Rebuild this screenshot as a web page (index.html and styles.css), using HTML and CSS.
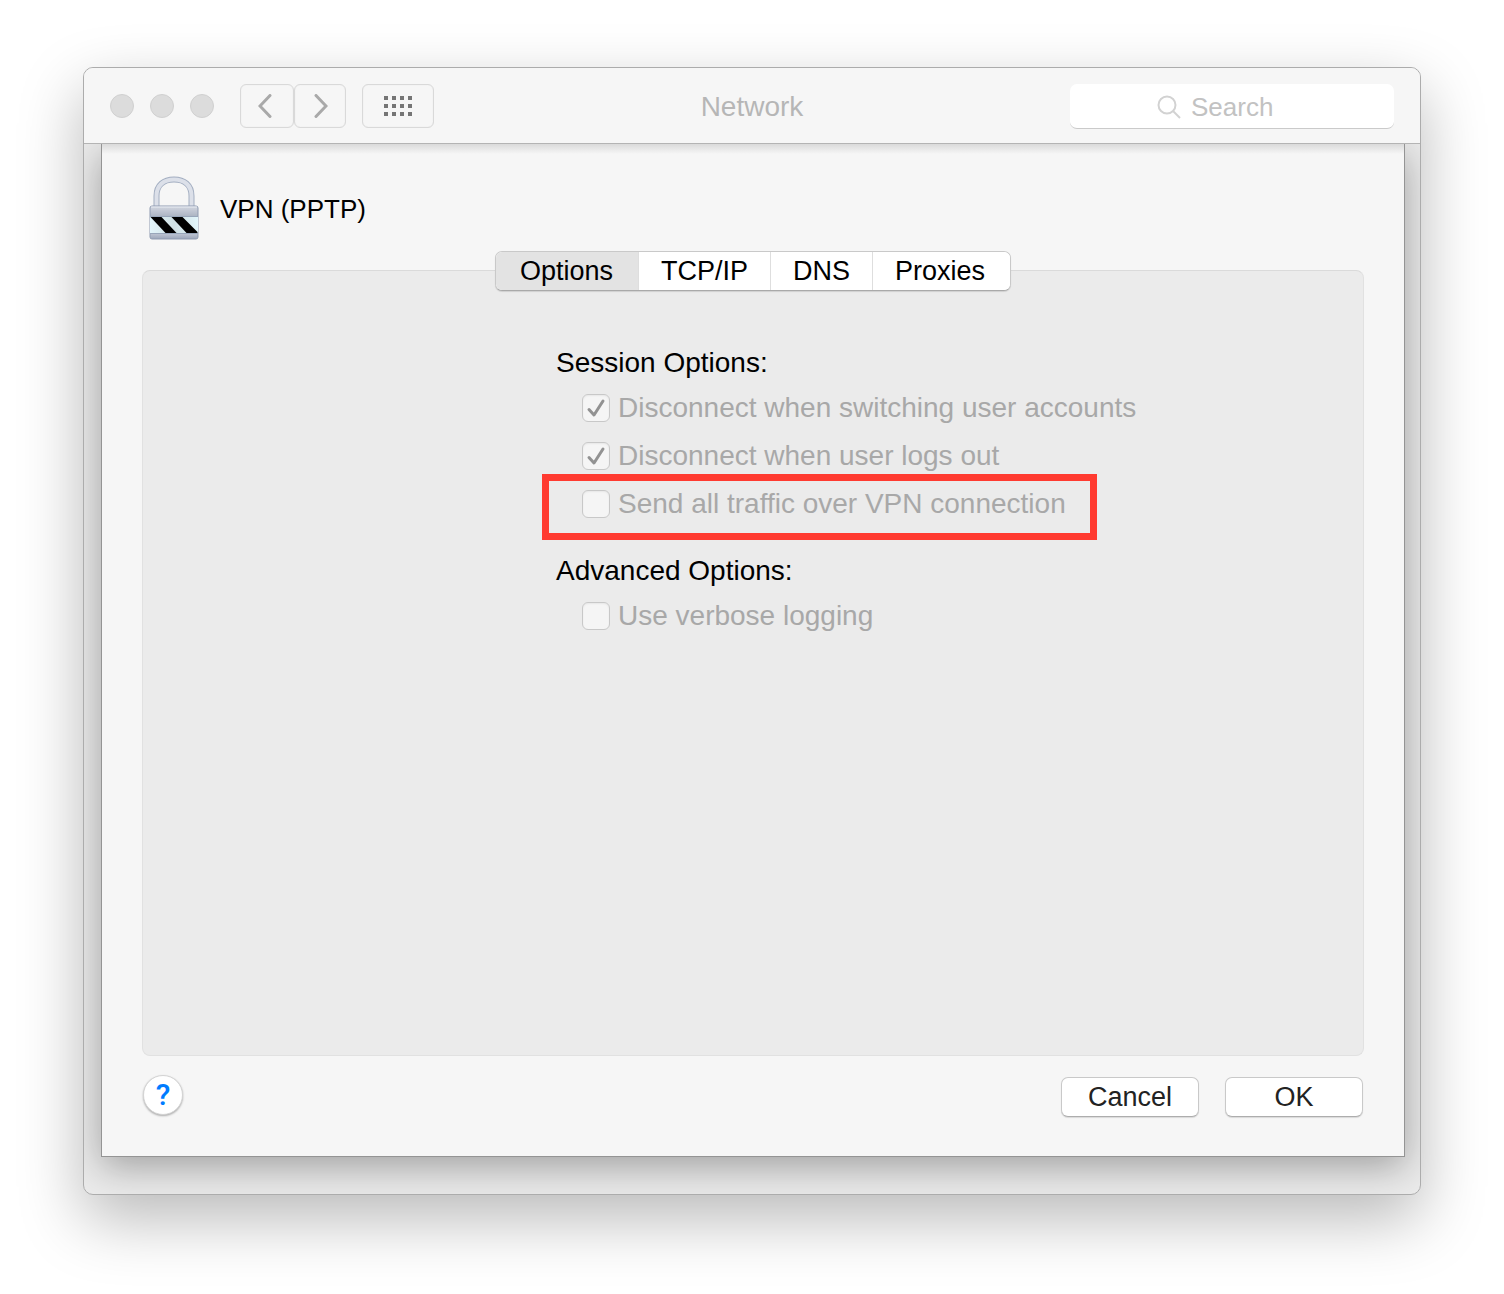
FILE: index.html
```html
<!DOCTYPE html>
<html lang="en">
<head>
<meta charset="utf-8">
<title>Network</title>
<link rel="stylesheet" href="styles.css">
</head>
<body>
<main class="window">
  <header class="toolbar">
    <div class="toolbar-left">
      <div class="lights"><span class="light"></span><span class="light"></span><span class="light"></span></div>
      <div class="nav">
        <button class="tool back" aria-label="Back"><svg width="14" height="24" viewBox="0 0 14 24"><path d="M12 1.500 2 12l10 10.500"/></svg></button>
        <button class="tool forward" aria-label="Forward"><svg width="14" height="24" viewBox="0 0 14 24"><path d="M2 1.500 12 12 2 22.500"/></svg></button>
      </div>
      <button class="tool grid" aria-label="Show all"><svg width="28" height="20" viewBox="0 0 28 20"><path d="M0 2h28M0 10h28M0 18h28"/></svg></button>
    </div>
    <h1 class="title">Network</h1>
    <label class="search">
      <svg width="24" height="24" viewBox="0 0 24 24"><circle cx="10" cy="10" r="8.500"/><path d="m16 16 7 7"/></svg>
      <input class="search-input" type="text" placeholder="Search" aria-label="Search">
    </label>
  </header>
  <section class="sheet">
    <div class="service">
      <svg class="lock" width="50" height="64" viewBox="0 0 50 64">
        <defs>
          <linearGradient id="steel" x1="0" y1="0" x2="0" y2="1"><stop offset="0" stop-color="#d3d7e1"/><stop offset=".33" stop-color="#aab2c1"/><stop offset=".8" stop-color="#c5cbd8"/><stop offset="1" stop-color="#9ca7ba"/></linearGradient>
          <linearGradient id="glass" x1="0" y1="0" x2="1" y2="0"><stop offset="0" stop-color="#e2f5fb"/><stop offset=".5" stop-color="#cfdfe3"/><stop offset="1" stop-color="#e2f5fb"/></linearGradient>
        </defs>
        <path d="M7.500 30V20C7.500 9 15 3.500 25 3.500S42.500 9 42.500 20v10" fill="none" stroke="#a3aec1" stroke-width="6"/>
        <path d="M7.500 30V20C7.500 9 15 3.500 25 3.500S42.500 9 42.500 20v10" fill="none" stroke="#dce0e9" stroke-width="4"/>
        <rect x="1" y="30" width="48" height="33" rx="2" fill="url(#steel)" stroke="#8f9bb1"/>
        <path d="M2 31h46" stroke="#e8ebf2"/>
        <path d="M1 41h48v16H1z" fill="url(#glass)"/>
        <path d="M1 40.500h48M1 57.500h48" stroke="#98a6ba"/>
        <path d="M1.500 41h11l15 16h-11zM22.500 41h11l15 15v1h-11z"/>
      </svg>
      <h2 class="service-name">VPN (PPTP)</h2>
    </div>
    <div class="tabs" role="tablist">
      <button class="tab selected" role="tab" aria-selected="true">Options</button>
      <button class="tab" role="tab">TCP/IP</button>
      <button class="tab" role="tab">DNS</button>
      <button class="tab" role="tab">Proxies</button>
    </div>
    <div class="panel">
      <fieldset class="group">
        <legend class="heading">Session Options:</legend>
        <label class="option"><input class="check" type="checkbox" checked disabled>Disconnect when switching user accounts</label>
        <label class="option"><input class="check" type="checkbox" checked disabled>Disconnect when user logs out</label>
        <label class="option highlighted"><input class="check" type="checkbox" disabled>Send all traffic over VPN connection</label>
      </fieldset>
      <fieldset class="group">
        <legend class="heading">Advanced Options:</legend>
        <label class="option"><input class="check" type="checkbox" disabled>Use verbose logging</label>
      </fieldset>
    </div>
    <footer class="actions">
      <button class="help" aria-label="Help">?</button>
      <button class="push">Cancel</button>
      <button class="push">OK</button>
    </footer>
  </section>
</main>
</body>
</html>
```
FILE: styles.css
```css
* { box-sizing: border-box; }

body {
  display: flex;
  min-height: 100vh;
  margin: 0;
  padding: 67px 83px 99px;
  background: #fff;
  color: #000;
  font: 28px/34px "Liberation Sans", Arial, sans-serif;
  white-space: nowrap;
}

button, input { margin: 0; padding: 0; font: inherit; }
h1, h2 { margin: 0; font-weight: 400; }

.window {
  display: flex;
  flex: 1;
  flex-direction: column;
  overflow: hidden;
  border: 1px solid #acacac;
  border-radius: 10px;
  background: #ebebeb;
  box-shadow: 0 24px 64px rgba(0, 0, 0, .28);
}

.toolbar {
  position: relative;
  z-index: 1;
  display: grid;
  grid-template-columns: 1fr auto 1fr;
  align-items: center;
  height: 76px;
  padding: 0 26px;
  border-bottom: 1px solid #b4b4b4;
  background: #f6f6f6;
}

.toolbar-left { display: flex; align-items: center; }
.lights { display: flex; gap: 16px; margin-right: 26px; }

.light {
  width: 24px;
  height: 24px;
  border: 1px solid #d0d0d0;
  border-radius: 50%;
  background: #dcdcdc;
}

.nav { display: flex; margin-right: 16px; }

.tool {
  display: flex;
  align-items: center;
  justify-content: center;
  height: 44px;
  border: 1px solid #d9d9d9;
  border-radius: 6px;
  background: #f6f6f6;
  box-shadow: inset 0 0 1px #dcdcdc;
}

.tool path { fill: none; stroke: #a9a9a9; stroke-width: 3; stroke-linecap: round; }
.back { width: 54px; padding-right: 4px; }
.forward { width: 52px; padding-left: 2px; }
.grid { width: 72px; }
.grid path { stroke: #757575; stroke-width: 4; stroke-linecap: butt; stroke-dasharray: 4 4; }
.title { padding-top: 2px; color: #b6b6b6; font-size: 28px; }

.search {
  display: flex;
  align-items: center;
  justify-self: end;
  gap: 10px;
  width: 324px;
  height: 45px;
  margin-top: 2px;
  padding: 2px 0 0 87px;
  border-bottom: 1px solid #cacaca;
  border-radius: 7px;
  background: #fff;
}

.search svg { flex: none; fill: none; stroke: #d2d2d2; stroke-width: 2; }
.search-input { width: 160px; border: 0; outline: 0; background: none; font-size: 26px; }
.search-input::placeholder { color: #c2c2c2; opacity: 1; }

.sheet {
  display: flex;
  flex: 1;
  flex-direction: column;
  margin: 0 15px 37px 17px;
  padding: 32px 40px 39px;
  border: 1px solid #949494;
  border-top: 0;
  background: linear-gradient(#dadada, #f6f6f6 10px);
  box-shadow: 0 10px 36px rgba(0, 0, 0, .32);
}

.service { display: flex; align-items: center; gap: 21px; margin-left: 7px; }
.service-name { padding-top: 2px; font-size: 26px; }

.tabs {
  z-index: 1;
  display: flex;
  align-self: center;
  height: 40px;
  margin: 11px 0 -21px;
  overflow: hidden;
  border: 1px solid #c9c9c9;
  border-bottom-color: #a9a9a9;
  border-radius: 7px;
  background: #fff;
  box-shadow: 0 1px 1px rgba(0, 0, 0, .12);
}

.tab {
  padding: 0 22px;
  border: 0;
  border-left: 1px solid #dedede;
  background: #fff;
  color: #000;
  font-size: 27px;
}

.selected { padding: 0 25px 0 24px; border-left: 0; background: #e3e3e3; }
.tab:last-child { padding-right: 25px; }

.panel {
  flex: 1;
  padding: 71px 0 71px 413px;
  border: 1px solid #e1e1e1;
  border-top-color: #dadada;
  border-radius: 8px;
  background: #ebebeb;
}

.group { display: flex; flex-direction: column; align-items: flex-start; margin: 0 0 22px; padding: 0; border: 0; }
.heading { padding: 0; line-height: 42px; }

.option {
  position: relative;
  display: flex;
  align-items: center;
  gap: 8px;
  height: 48px;
  margin-left: 26px;
  color: #a8a8a8;
}

.check {
  width: 28px;
  height: 28px;
  appearance: none;
  border: 1px solid #c8c8c8;
  border-radius: 6px;
  background: #f5f5f5;
  box-shadow: inset 0 1px 2px rgba(0, 0, 0, .06);
}

.check:checked {
  background: #f5f5f5 url('data:image/svg+xml,<svg xmlns="http://www.w3.org/2000/svg" viewBox="0 0 26 26"><path d="M6 14.500 11 20 20 6" fill="none" stroke="%23929292" stroke-width="3" stroke-linecap="round" stroke-linejoin="round"/></svg>');
}

.highlighted::after {
  content: "";
  position: absolute;
  inset: -6px -31px -12px -40px;
  border: 7px solid #ff3a30;
}

.actions { display: flex; align-items: center; gap: 26px; padding: 21px 1px 0; }

.help {
  width: 40px;
  height: 40px;
  margin: -4px auto 0 0;
  border: 1px solid #d4d4d4;
  border-radius: 50%;
  background: #fff;
  box-shadow: 0 1px 2px rgba(0, 0, 0, .3);
  color: #007cff;
  font-family: Roboto, sans-serif;
  font-size: 30px;
  font-weight: 500;
}

.push {
  width: 138px;
  height: 40px;
  border: 1px solid #c9c9c9;
  border-bottom-color: #adadad;
  border-radius: 7px;
  background: #fff;
  box-shadow: 0 1px 1px rgba(0, 0, 0, .12);
  color: #222;
  font-size: 27px;
}
```
